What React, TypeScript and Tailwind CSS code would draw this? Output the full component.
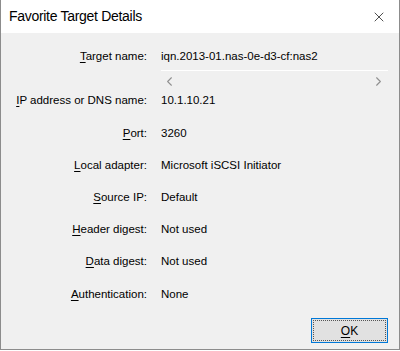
import { X, ChevronLeft, ChevronRight } from 'lucide-react';

const rows: { label: string; value: string }[] = [
  { label: 'IP address or DNS name:', value: '10.1.10.21' },
  { label: 'Port:', value: '3260' },
  { label: 'Local adapter:', value: 'Microsoft iSCSI Initiator' },
  { label: 'Source IP:', value: 'Default' },
  { label: 'Header digest:', value: 'Not used' },
  { label: 'Data digest:', value: 'Not used' },
  { label: 'Authentication:', value: 'None' },
];

// first letter carries the accelerator underline
function Label({ text }: { text: string }) {
  return (
    <span>
      <span className="underline underline-offset-2">{text[0]}</span>
      {text.slice(1)}
    </span>
  );
}

export default function App() {
  return (
    <div
      className="w-[400px] h-[350px] bg-[#f0f0f0] border border-t-0 border-[#8c8c8c] flex flex-col text-black"
      style={{ fontFamily: '"Segoe UI", "Liberation Sans", Arial, sans-serif' }}
    >
      {/* Title bar */}
      <div className="h-[33px] bg-white flex items-center justify-between pl-[8px] pr-[12px] shrink-0">
        <span className="text-[14px] tracking-[-0.3px]">Favorite Target Details</span>
        <X className="w-[16px] h-[16px] text-[#222]" strokeWidth={1.2} />
      </div>

      {/* Body */}
      <div className="flex-1 flex flex-col text-[11.5px] pt-[16px]">
        <div className="flex h-[16px] items-center">
          <div className="w-[146px] text-right">
            <Label text="Target name:" />
          </div>
          <div className="pl-[14px]">iqn.2013-01.nas-0e-d3-cf:nas2</div>
        </div>

        {/* horizontal scroll strip of the read-only edit */}
        <div className="ml-[160px] mr-[11px] mt-[5px] h-[21px] border-t border-white flex items-center justify-between pl-[1px] pr-[2px] text-[#8f8f8f]">
          <ChevronLeft className="w-[15px] h-[15px]" strokeWidth={1.7} />
          <ChevronRight className="w-[15px] h-[15px]" strokeWidth={1.7} />
        </div>

        <div className="flex flex-col gap-[16.2px] mt-[2px]">
          {rows.map((r) => (
            <div key={r.label} className="flex h-[16px] items-center">
              <div className="w-[146px] text-right">
                <Label text={r.label} />
              </div>
              <div className="pl-[14px]">{r.value}</div>
            </div>
          ))}
        </div>

        <div className="flex justify-end mt-auto mb-[6px] mr-[11px]">
          <button className="w-[77px] h-[25px] bg-[#e1e1e1] border border-[#0078d7] p-[1px]">
            <div className="w-full h-full border border-dotted border-[#555] flex items-center justify-center text-[12px]">
              <span>
                <span className="underline underline-offset-2">O</span>K
              </span>
            </div>
          </button>
        </div>
      </div>
    </div>
  );
}
